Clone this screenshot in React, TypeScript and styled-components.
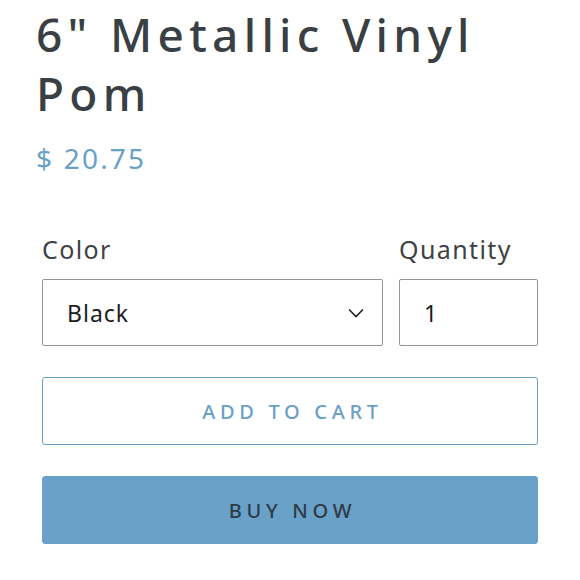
import React from 'react'
import styled, { createGlobalStyle } from 'styled-components'

const Global = createGlobalStyle`
  html, body {
    margin: 0;
    background: #fff;
  }
  body {
    font-family: 'Noto Sans', 'Liberation Sans', sans-serif;
    color: #3d4246;
  }
`

const Page = styled.div`
  width: 580px;
  padding: 0 42px;
  box-sizing: border-box;
`

const Title = styled.h1`
  margin: 0 0 0 -6px;
  padding-top: 5px;
  font-size: 46px;
  font-weight: 500;
  line-height: 59px;
  letter-spacing: 5.3px;
  color: #3a3f44;
`

const Price = styled.div`
  margin: 18px 0 0 -6px;
  font-size: 28px;
  line-height: 34px;
  letter-spacing: 2.2px;
  color: #6a9fc6;
`

const Fields = styled.div`
  display: grid;
  grid-template-columns: 1fr 139px;
  column-gap: 16px;
  margin-top: 59px;
`

const Field = styled.label`
  display: flex;
  flex-direction: column;
`

const Label = styled.span`
  font-size: 25px;
  line-height: 30px;
  letter-spacing: 1.4px;
  color: #3d4246;
  margin-bottom: 15px;
`

const Box = styled.div`
  height: 67px;
  box-sizing: border-box;
  border: 1px solid #949494;
  border-radius: 2px;
  display: flex;
  align-items: center;
  justify-content: space-between;
  padding: 0 18px 0 24px;
  font-size: 23px;
  letter-spacing: 1px;
  color: #1c1d1d;
`

const Chevron = () => (
  <svg width="16" height="10" viewBox="0 0 16 10" fill="none">
    <path d="M1 1.5 L8 8.5 L15 1.5" stroke="#222" strokeWidth="1.6" />
  </svg>
)

const Button = styled.button<{ $solid?: boolean }>`
  display: block;
  width: 100%;
  height: 68px;
  box-sizing: border-box;
  border-radius: 3px;
  border: 1px solid ${p => (p.$solid ? '#6aa1c8' : '#6a9fc6')};
  background: ${p => (p.$solid ? '#6aa1c8' : '#fff')};
  color: ${p => (p.$solid ? '#2f3b46' : '#6a9fc6')};
  font-family: 'Noto Sans', 'Liberation Sans', sans-serif;
  font-size: 20px;
  font-weight: 500;
  letter-spacing: 4.7px;
  text-transform: uppercase;
  margin-top: 31px;
  padding: 0 0 0 5px;
`

export default function App() {
  return (
    <Page>
      <Global />
      <Title>
        6" Metallic Vinyl
        <br />
        Pom
      </Title>
      <Price>$ 20.75</Price>
      <Fields>
        <Field>
          <Label>Color</Label>
          <Box>
            Black
            <Chevron />
          </Box>
        </Field>
        <Field>
          <Label>Quantity</Label>
          <Box>1</Box>
        </Field>
      </Fields>
      <Button>Add to cart</Button>
      <Button $solid>Buy now</Button>
    </Page>
  )
}
